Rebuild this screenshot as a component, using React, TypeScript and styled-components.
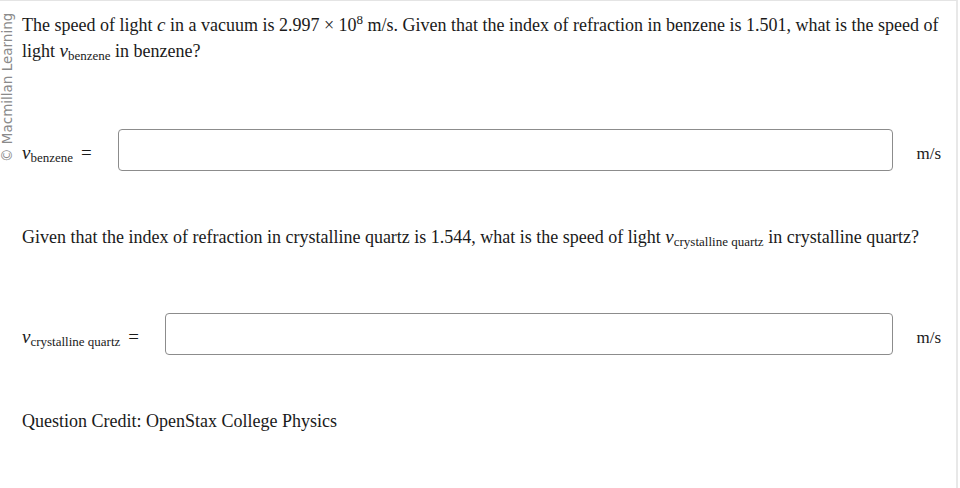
import React from "react";
import styled, { createGlobalStyle } from "styled-components";

const Global = createGlobalStyle`
  html, body { margin: 0; padding: 0; background: #fff; }
  body { font-family: "Liberation Serif", "Times New Roman", serif; color: #1a1a1a; }
`;

const Frame = styled.div`
  position: relative;
  width: 958px;
  height: 488px;
  box-sizing: border-box;
  border-top: 1px solid #e4e4e4;
  border-right: 2px solid #e8e8e8;
  overflow: hidden;
`;

const Watermark = styled.div`
  position: absolute;
  left: 0;
  top: 161px;
  transform-origin: 0 0;
  transform: rotate(-90deg);
  font-family: "DejaVu Sans", "Liberation Sans", sans-serif;
  font-size: 13.5px;
  color: #8a8a8a;
  white-space: nowrap;
  line-height: 15px;
`;

const Content = styled.div`
  display: flex;
  flex-direction: column;
  padding: 11px 15px 0 22px;
  font-size: 18px;
  line-height: 25px;
`;

const Para = styled.p<{ $mt?: number }>`
  margin: ${(p) => p.$mt ?? 0}px 0 0 0;
`;

const Var = styled.span`
  white-space: nowrap;
`;

const V = styled.i`
  font-style: italic;
  font-size: 19px;
`;

const Sub = styled.sub`
  font-size: 13px;
  vertical-align: -3px;
  line-height: 0;
`;

const Sup = styled.sup`
  font-size: 13px;
  vertical-align: 7px;
  line-height: 0;
`;

const Row = styled.div<{ $mt: number }>`
  display: flex;
  align-items: center;
  margin-top: ${(p) => p.$mt}px;
  height: 42px;
`;

const Label = styled.div<{ $w: number }>`
  width: ${(p) => p.$w}px;
  flex: none;
  font-size: 18px;
  white-space: nowrap;
  padding-top: 6px;
`;

const Eq = styled.span`
  margin-left: 8px;
  font-size: 19px;
`;

const Input = styled.input`
  flex: 1;
  height: 42px;
  box-sizing: border-box;
  border: 1.5px solid #8c8c8c;
  border-radius: 4px;
  background: #fff;
  outline: none;
  margin: 0;
`;

const Unit = styled.div`
  width: 48px;
  flex: none;
  text-align: right;
  font-size: 17px;
  padding-top: 6px;
`;

export default function App() {
  return (
    <>
      <Global />
      <Frame>
        <Watermark>© Macmillan Learning</Watermark>
        <Content>
          <Para>
            The speed of light <V>c</V> in a vacuum is 2.997 × 10<Sup>8</Sup> m/s. Given that the
            index of refraction in benzene is 1.501, what is the speed of light{" "}
            <Var>
              <V>v</V>
              <Sub>benzene</Sub>
            </Var>{" "}
            in benzene?
          </Para>
          <Row $mt={65}>
            <Label $w={96}>
              <V>v</V>
              <Sub>benzene</Sub>
              <Eq>=</Eq>
            </Label>
            <Input />
            <Unit>m/s</Unit>
          </Row>
          <Para $mt={53}>
            Given that the index of refraction in crystalline quartz is 1.544, what is the speed of
            light{" "}
            <Var>
              <V>v</V>
              <Sub>crystalline quartz</Sub>
            </Var>{" "}
            in crystalline quartz?
          </Para>
          <Row $mt={63}>
            <Label $w={143}>
              <V>v</V>
              <Sub>crystalline quartz</Sub>
              <Eq>=</Eq>
            </Label>
            <Input />
            <Unit>m/s</Unit>
          </Row>
          <Para $mt={54}>Question Credit: OpenStax College Physics</Para>
        </Content>
      </Frame>
    </>
  );
}
